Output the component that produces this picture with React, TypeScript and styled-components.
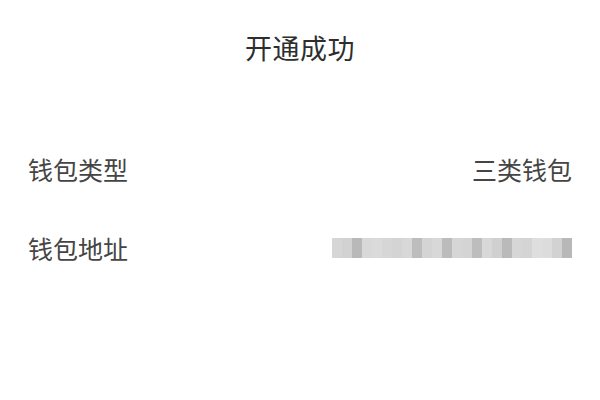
import styled, { createGlobalStyle } from 'styled-components';

const GlobalStyle = createGlobalStyle`
  html, body {
    margin: 0;
    padding: 0;
    background: #ffffff;
  }
  body {
    font-family: "Noto Sans CJK SC", "Noto Sans", sans-serif;
  }
`;

// 地址被打码，用灰色小方块模拟
const blurCells = [
  '#d6d6d6', '#d2d2d2', '#b9b9b9', '#d8d8d8', '#dadada', '#d6d6d6',
  '#d4d4d4', '#d8d8d8', '#bdbdbd', '#d4d4d4', '#d8d8d8', '#bcbcbc',
  '#d6d6d6', '#d4d4d4', '#bdbdbd', '#d8d8d8', '#d0d0d0', '#bababa',
  '#d6d6d6', '#d4d4d4', '#dedede', '#dcdcdc', '#d2d2d2', '#b8b8b8',
];

const rows = [
  { label: '钱包类型', value: '三类钱包' },
  { label: '钱包地址', value: null },
];

export default function App() {
  return (
    <>
      <GlobalStyle />
      <Page>
        <Header>开通成功</Header>
        <List>
          {rows.map((row) => (
            <Row key={row.label}>
              <Label>{row.label}</Label>
              {row.value ? (
                <Value>{row.value}</Value>
              ) : (
                <Masked>
                  {blurCells.map((c, i) => (
                    <Cell key={i} $color={c} />
                  ))}
                </Masked>
              )}
            </Row>
          ))}
        </List>
      </Page>
    </>
  );
}

const Page = styled.div`
  width: 600px;
  height: 400px;
  background: #ffffff;
  display: flex;
  flex-direction: column;
`;

const Header = styled.h1`
  margin: 0;
  height: 94px;
  display: flex;
  align-items: center;
  justify-content: center;
  font-size: 27px;
  font-weight: 400;
  color: #2e2e2e;
  letter-spacing: 0.5px;
`;

const List = styled.div`
  display: flex;
  flex-direction: column;
  padding: 53px 28px 0 28px;
  gap: 35px;
`;

const Row = styled.div`
  height: 44px;
  display: flex;
  align-items: center;
  justify-content: space-between;
`;

const Label = styled.span`
  font-size: 25px;
  color: #454545;
`;

const Value = styled.span`
  font-size: 25px;
  color: #454545;
`;

const Masked = styled.div`
  display: flex;
  height: 20px;
  filter: blur(0.6px);
`;

const Cell = styled.div<{ $color: string }>`
  width: 10px;
  height: 100%;
  background: ${(p) => p.$color};
`;
